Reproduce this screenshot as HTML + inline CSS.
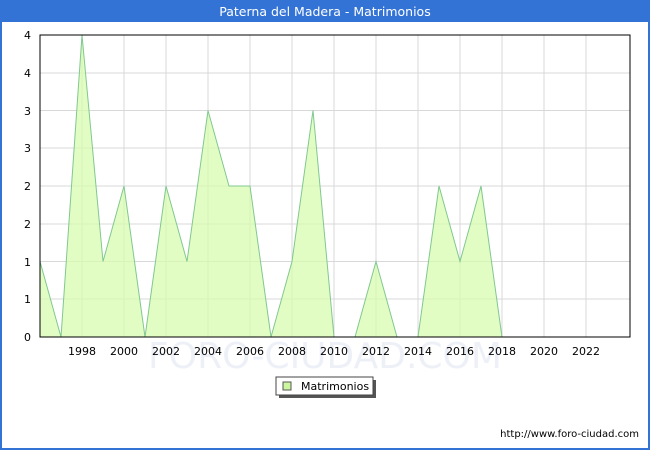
<!DOCTYPE html>
<html><head><meta charset="utf-8"><style>
body{margin:0;width:650px;height:450px;overflow:hidden;font-family:"DejaVu Sans","Liberation Sans",sans-serif;}
</style></head><body>
<svg width="650" height="450" xmlns="http://www.w3.org/2000/svg" font-family="DejaVu Sans, Liberation Sans, sans-serif">
<rect x="0" y="0" width="650" height="450" fill="#3373d6"/>
<rect x="2" y="22" width="646" height="426" fill="#fff"/>
<text x="325" y="16" fill="#fff" font-size="12.5" text-anchor="middle">Paterna del Madera - Matrimonios</text>
<text x="325" y="368" fill="#eef0f8" font-size="36" text-anchor="middle">FORO-CIUDAD.COM</text>
<g stroke="#d8d8d8" stroke-width="1">
<line x1="40" y1="73" x2="630" y2="73"/><line x1="40" y1="110.5" x2="630" y2="110.5"/><line x1="40" y1="148" x2="630" y2="148"/><line x1="40" y1="186" x2="630" y2="186"/><line x1="40" y1="224" x2="630" y2="224"/><line x1="40" y1="261.5" x2="630" y2="261.5"/><line x1="40" y1="299" x2="630" y2="299"/>
<line x1="82" y1="35" x2="82" y2="337"/><line x1="124" y1="35" x2="124" y2="337"/><line x1="166" y1="35" x2="166" y2="337"/><line x1="208" y1="35" x2="208" y2="337"/><line x1="250" y1="35" x2="250" y2="337"/><line x1="292" y1="35" x2="292" y2="337"/><line x1="334" y1="35" x2="334" y2="337"/><line x1="376" y1="35" x2="376" y2="337"/><line x1="418" y1="35" x2="418" y2="337"/><line x1="460" y1="35" x2="460" y2="337"/><line x1="502" y1="35" x2="502" y2="337"/><line x1="544" y1="35" x2="544" y2="337"/><line x1="586" y1="35" x2="586" y2="337"/>
</g>
<polygon fill="#d8fcb0" fill-opacity="0.75" stroke="#80c890" stroke-width="1" points="40,337 40,261.5 61,337 82,35 103,261.5 124,186 145,337 166,186 187,261.5 208,110.5 229,186 250,186 271,337 292,261.5 313,110.5 334,337 355,337 376,261.5 397,337 418,337 439,186 460,261.5 481,186 502,337"/>
<rect x="40" y="35" width="590" height="302" fill="none" stroke="#000" stroke-width="1"/>
<g font-size="11" fill="#000" text-anchor="end">
<text x="31" y="39">4</text><text x="31" y="77">4</text><text x="31" y="115">3</text><text x="31" y="152">3</text><text x="31" y="190">2</text><text x="31" y="228">2</text><text x="31" y="266">1</text><text x="31" y="303">1</text><text x="31" y="341">0</text>
</g>
<g font-size="11" fill="#000" text-anchor="middle">
<text x="82" y="355">1998</text><text x="124" y="355">2000</text><text x="166" y="355">2002</text><text x="208" y="355">2004</text><text x="250" y="355">2006</text><text x="292" y="355">2008</text><text x="334" y="355">2010</text><text x="376" y="355">2012</text><text x="418" y="355">2014</text><text x="460" y="355">2016</text><text x="502" y="355">2018</text><text x="544" y="355">2020</text><text x="586" y="355">2022</text>
</g>
<rect x="279" y="380" width="97" height="18" fill="#555"/>
<rect x="276" y="377" width="97" height="18" fill="#fff" stroke="#444" stroke-width="1"/>
<rect x="283" y="382" width="8" height="8" fill="#ccf5a0" stroke="#555" stroke-width="1"/>
<text x="301" y="390" font-size="11" fill="#000">Matrimonios</text>
<text x="639" y="437" font-size="10" fill="#000" text-anchor="end">http://www.foro-ciudad.com</text>
</svg>
</body></html>
